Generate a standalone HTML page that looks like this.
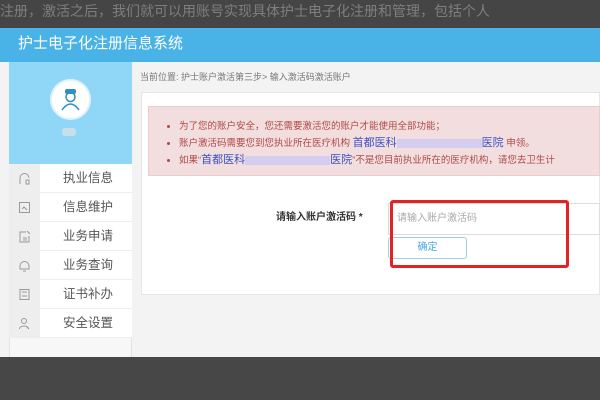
<!DOCTYPE html>
<html><head><meta charset="utf-8"><style>
*{margin:0;padding:0;box-sizing:border-box}
body{width:600px;height:400px;overflow:hidden;background:#f3f3f3;font-family:"Liberation Sans","Noto Sans CJK SC",sans-serif;position:relative}
.a{position:absolute}
.top{left:0;top:0;width:600px;height:28px;background:#454545;color:#7e7e7e;font-size:14px;line-height:22px;white-space:nowrap;overflow:hidden}
.hdr{left:0;top:28px;width:600px;height:34px;background:#49b2e7;color:#fff;font-size:15px;line-height:32px;padding-left:18px}
.bot{left:0;top:357px;width:600px;height:43px;background:#474747}
.side{left:9px;top:62px;width:123px;height:295px;background:#f7f7f7;border-right:1px solid #e3e3e3;border-left:1px solid #e3e3e3}
.sb{left:9px;top:62px;width:123px;height:102px;background:#90d6f7}
.av{left:50px;top:79px;width:41px;height:41px;border-radius:50%;background:#fff;border:2px solid #dff3fc}
.menu{left:9px;width:123px;height:29px;border-bottom:1px solid #eee;background:#fff}
.menu .ic{position:absolute;left:0;top:0;width:31px;height:29px;background:#eeeeee}
.menu .ic svg{position:absolute;left:9px;top:8px}
.menu .t{position:absolute;left:54px;top:0;line-height:29px;font-size:12.5px;color:#555}
.bc{left:140px;top:70px;font-size:9px;color:#777}
.panel{left:141px;top:92px;width:459px;height:203px;background:#fff;border:1px solid #e6e6e6}
.alert{left:148px;top:106px;width:452px;height:70px;background:#f2dede;border:1px solid #ebccd1}
.alert ul{position:absolute;left:30px;top:12px;font-size:9.5px;color:#b04a48;line-height:16px;list-style:disc;white-space:nowrap}
.alert b{font-weight:normal;color:#3b50c8;font-size:11px}
.blur{display:inline-block;width:85px;height:9px;background:#d5cdf0;vertical-align:middle}
.lbl{left:276px;top:208px;font-size:10px;font-weight:bold;color:#333}
.inp{left:388px;top:203px;width:212px;height:32px;border:1px solid #ddd;background:#fff;font-size:10px;color:#aaa;line-height:30px;padding-left:8px}
.btn{left:388px;top:237px;width:79px;height:22px;border:1px solid #9fd0ea;border-radius:3px;background:#fff;color:#49a7dd;font-size:10px;text-align:center;line-height:20px}
.red{left:390px;top:200px;width:179px;height:68px;border:3px solid #e52222;border-radius:3px}
</style></head><body>
<div class="a top">注册，激活之后，我们就可以用账号实现具体护士电子化注册和管理，包括个人</div>
<div class="a hdr">护士电子化注册信息系统</div>
<div class="a side"></div>
<div class="a sb"></div>
<div class="a av"><svg width="37" height="37" viewBox="0 0 37 37"><rect x="13" y="8" width="11" height="5" rx="2" fill="#2f8fc4"/><circle cx="18.5" cy="16" r="4.5" fill="none" stroke="#2f8fc4" stroke-width="1.5"/><path d="M10 29 Q18.5 17 27 29" fill="none" stroke="#2f8fc4" stroke-width="1.5"/></svg></div>
<div class="a" style="left:62px;top:128px;width:14px;height:8px;background:#c8dfe9;border-radius:3px"></div>
<div class="a menu" style="top:164px"><div class="ic"><svg width="13" height="13" fill="none" stroke="#999"><path d="M2 12V6a4.5 4.5 0 0 1 9 0M8 8h3v4H8z"/></svg></div><div class="t">执业信息</div></div>
<div class="a menu" style="top:193px"><div class="ic"><svg width="13" height="13" fill="none" stroke="#999"><rect x="1.5" y="1.5" width="10" height="10"/><path d="M4 8l2-2 3 3"/></svg></div><div class="t">信息维护</div></div>
<div class="a menu" style="top:222px"><div class="ic"><svg width="13" height="13" fill="none" stroke="#999"><path d="M11 6v6H2V2h6M5 8h4M5 10h4M9 1l3 3"/></svg></div><div class="t">业务申请</div></div>
<div class="a menu" style="top:251px"><div class="ic"><svg width="13" height="13" fill="none" stroke="#999"><path d="M2 7a4.5 4.5 0 0 1 9 0v3H2zM5 12h3"/></svg></div><div class="t">业务查询</div></div>
<div class="a menu" style="top:280px"><div class="ic"><svg width="13" height="13" fill="none" stroke="#999"><rect x="2" y="1.5" width="9" height="10"/><path d="M4 4h5M4 8h5"/></svg></div><div class="t">证书补办</div></div>
<div class="a menu" style="top:309px"><div class="ic"><svg width="13" height="13" fill="none" stroke="#999"><circle cx="6" cy="4" r="2.5"/><path d="M1.5 12c0-4 9-4 9 0M8 9l3 3"/></svg></div><div class="t">安全设置</div></div>
<div class="a bc">当前位置: 护士账户激活第三步&gt; 输入激活码激活账户</div>
<div class="a panel"></div>
<div class="a alert"><ul>
<li>为了您的账户安全，您还需要激活您的账户才能使用全部功能；</li>
<li>账户激活码需要您到您执业所在医疗机构 <b>首都医科<span class="blur"></span>医院</b> 申领。</li>
<li>如果“<b>首都医科<span class="blur"></span>医院</b>”不是您目前执业所在的医疗机构，请您去卫生计</li>
</ul></div>
<div class="a lbl">请输入账户激活码 *</div>
<div class="a inp">请输入账户激活码</div>
<div class="a btn">确定</div>
<div class="a red"></div>
<div class="a bot"></div>
</body></html>
